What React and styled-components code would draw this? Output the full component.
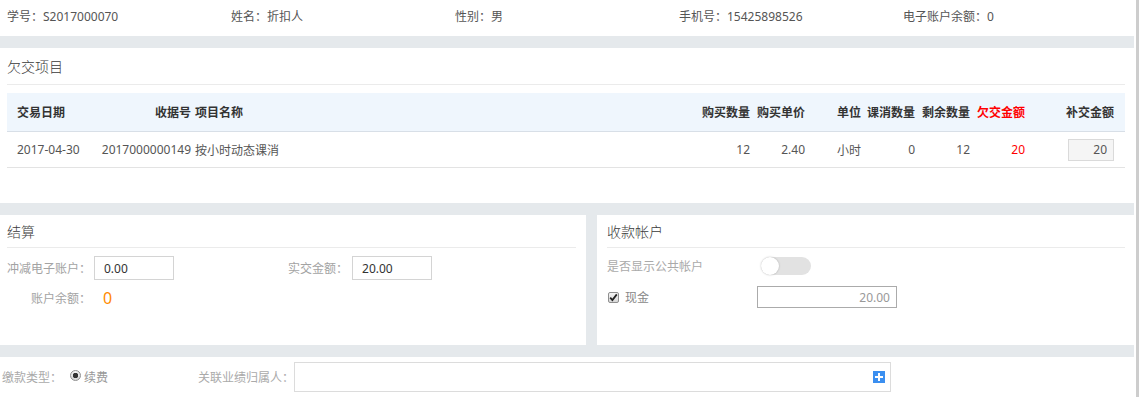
import React from 'react';
import styled, { createGlobalStyle } from 'styled-components';

const GlobalStyle = createGlobalStyle`
  body {
    margin: 0;
    background: #fff;
    font-family: "Noto Sans", "Noto Sans CJK SC", sans-serif;
    font-size: 12px;
    color: #555;
  }
`;

const Frame = styled.div`
  width: 1134px;
  padding-right: 2px;
  border-right: 3px solid #cdcdcd;
  min-height: 397px;
  display: flex;
`;

const Page = styled.div`
  flex: 1;
  display: flex;
  flex-direction: column;
  gap: 12px;
  background: #e5e9ec;
`;

const InfoBar = styled.div`
  display: grid;
  grid-template-columns: repeat(5, 224px);
  align-items: center;
  height: 32px;
  padding: 0 7px 4px;
  background: #fff;
  color: #555;
`;

const Section = styled.section`
  background: #fff;
  padding: 0 9px 35px 7px;
`;

const Title = styled.div`
  height: ${(p) => p.$h || 36}px;
  display: flex;
  align-items: center;
  font-size: 14px;
  font-weight: 300;
  color: #3a3a3a;
  border-bottom: 1px solid #ebebeb;
`;

const Table = styled.div`
  margin-top: 8px;
`;

const Row = styled.div`
  display: grid;
  grid-template-columns: 86px 100px 1fr 55px 55px 56px 54px 55px 55px 98px;
  align-items: center;
  height: ${(p) => (p.$head ? 38 : 35)}px;
  background: ${(p) => (p.$head ? '#eff6fd' : '#fff')};
  border-bottom: 1px solid ${(p) => (p.$head ? '#d8dfe7' : '#e3e3e3')};
  font-weight: ${(p) => (p.$head ? 'bold' : 'normal')};
  color: ${(p) => (p.$head ? '#333' : '#555')};
`;

const Cell = styled.div`
  padding: 0 ${(p) => p.$pr ?? 2}px 0 ${(p) => p.$pl ?? 2}px;
  color: ${(p) => p.$color || 'inherit'};
  white-space: nowrap;
  display: flex;
  justify-content: ${(p) => (p.$align === 'left' ? 'flex-start' : 'flex-end')};
`;

const TextInput = styled.input`
  box-sizing: border-box;
  width: ${(p) => p.$w}px;
  height: ${(p) => p.$h}px;
  margin: 0;
  padding: 0 ${(p) => (p.$align === 'right' ? 6 : 9)}px;
  border: 1px solid ${(p) => p.$border || '#d4d4d4'};
  background: ${(p) => p.$bg || '#fff'};
  color: ${(p) => p.$color || '#333'};
  text-align: ${(p) => p.$align || 'left'};
  font-family: "Noto Sans", "Noto Sans CJK SC", sans-serif;
  font-size: 12px;
  outline: none;
`;

const Panels = styled.div`
  display: grid;
  grid-template-columns: 586px 537px;
  column-gap: 11px;
  height: 130px;
`;

const Panel = styled.section`
  background: #fff;
  padding: 0 ${(p) => p.$pr}px 0 ${(p) => p.$pl}px;
`;

const FormRow = styled.div`
  display: flex;
  align-items: center;
  height: ${(p) => p.$h}px;
  margin-top: ${(p) => p.$mt}px;
`;

const Field = styled.div`
  display: flex;
  align-items: center;
  width: ${(p) => (p.$w ? `${p.$w}px` : 'auto')};
  height: ${(p) => (p.$h ? `${p.$h}px` : 'auto')};
`;

const Label = styled.span`
  display: inline-block;
  width: ${(p) => (p.$w ? `${p.$w}px` : 'auto')};
  text-align: ${(p) => p.$align || 'left'};
  margin-right: ${(p) => p.$mr || 0}px;
  color: ${(p) => p.$color || '#a3a3a3'};
  white-space: nowrap;
`;

const Amount = styled.span`
  padding-left: 9px;
  font-size: 16px;
  color: #ff8a00;
`;

const Toggle = styled.span`
  box-sizing: border-box;
  width: 50px;
  height: 18px;
  border-radius: 9px;
  background: #e2e2e2;
  display: flex;
  align-items: center;
  &::before {
    content: '';
    width: 18px;
    height: 18px;
    border-radius: 50%;
    background: #fff;
    box-shadow: 0 0 2px rgba(0, 0, 0, 0.25);
  }
`;

const CheckLabel = styled.span`
  width: 150px;
  display: flex;
  align-items: center;
  gap: 6px;
  padding-left: 1px;
  box-sizing: border-box;
  color: #888;
`;

const CheckBox = styled.span`
  box-sizing: border-box;
  width: 11px;
  height: 11px;
  border: 1px solid #8f8f8f;
  border-radius: 2px;
  background: linear-gradient(#f4f4f4, #d8d8d8);
  display: flex;
  align-items: center;
  justify-content: center;
`;

const BottomBar = styled.div`
  flex: 1;
  background: #fff;
  display: flex;
  align-items: flex-start;
  padding: 5px 0 0 2px;
`;

const Radio = styled.span`
  box-sizing: border-box;
  width: 11px;
  height: 11px;
  border-radius: 50%;
  border: 1px solid #8f8f8f;
  background: radial-gradient(circle, #333 0 2.5px, transparent 3px), linear-gradient(#f4f4f4, #d6d6d6);
  margin-right: 3px;
  margin-top: -3px;
`;

const PickerBox = styled.div`
  box-sizing: border-box;
  width: 597px;
  height: 30px;
  border: 1px solid #dcdcdc;
  display: flex;
  align-items: center;
  justify-content: flex-end;
  padding-right: 5px;
`;

const PlusButton = styled.span`
  width: 12px;
  height: 12px;
  background: #3b8ff0;
  display: flex;
`;

const cols = [
  { head: '交易日期', value: '2017-04-30', align: 'left', pl: 10 },
  { head: '收据号', value: '2017000000149' },
  { head: '项目名称', value: '按小时动态课消', align: 'left' },
  { head: '购买数量', value: '12' },
  { head: '购买单价', value: '2.40' },
  { head: '单位', value: '小时' },
  { head: '课消数量', value: '0' },
  { head: '剩余数量', value: '12' },
  { head: '欠交金额', value: '20', color: '#f00' },
];

const info = ['学号：S2017000070', '姓名：折扣人', '性别：男', '手机号：15425898526', '电子账户余额：0'];

export default function App() {
  return (
    <>
      <GlobalStyle />
      <Frame>
        <Page>
          <InfoBar>
            {info.map((t) => (
              <span key={t}>{t}</span>
            ))}
          </InfoBar>

          <Section>
            <Title>欠交项目</Title>
            <Table>
              <Row $head>
                {cols.map((c) => (
                  <Cell key={c.head} $align={c.align} $pl={c.pl} $color={c.color}>
                    {c.head}
                  </Cell>
                ))}
                <Cell $pr={11}>补交金额</Cell>
              </Row>
              <Row>
                {cols.map((c) => (
                  <Cell key={c.head} $align={c.align} $pl={c.pl} $color={c.color}>
                    {c.value}
                  </Cell>
                ))}
                <Cell $pr={11}>
                  <TextInput readOnly value="20" $w={46} $h={22} $align="right" $bg="#f5f5f5" $border="#dadada" $color="#555" />
                </Cell>
              </Row>
            </Table>
          </Section>

          <Panels>
            <Panel $pl={7} $pr={10}>
              <Title $h={32}>结算</Title>
              <FormRow $h={24} $mt={8}>
                <Field $w={281}>
                  <Label $w={84} $align="right" $mr={3}>冲减电子账户：</Label>
                  <TextInput readOnly value="0.00" $w={80} $h={24} />
                </Field>
                <Field>
                  <Label $mr={4}>实交金额：</Label>
                  <TextInput readOnly value="20.00" $w={80} $h={24} />
                </Field>
              </FormRow>
              <FormRow $h={24} $mt={6}>
                <Label $w={84} $align="right" $mr={3}>账户余额：</Label>
                <Amount>0</Amount>
              </FormRow>
            </Panel>

            <Panel $pl={10} $pr={9}>
              <Title $h={32}>收款帐户</Title>
              <FormRow $h={20} $mt={8}>
                <Label $w={154} $color="#aaa">是否显示公共帐户</Label>
                <Toggle />
              </FormRow>
              <FormRow $h={22} $mt={10}>
                <CheckLabel>
                  <CheckBox>
                    <svg width="9" height="9" viewBox="0 0 9 9">
                      <path d="M1.2 4.6 L3.4 7 L7.8 1.4" fill="none" stroke="#222" strokeWidth="1.8" />
                    </svg>
                  </CheckBox>
                  现金
                </CheckLabel>
                <TextInput readOnly value="20.00" $w={140} $h={22} $align="right" $border="#ababab" $color="#999" />
              </FormRow>
            </Panel>
          </Panels>

          <BottomBar>
            <Field $w={196} $h={30}>
              <Label $color="#aaa" $mr={8}>缴款类型：</Label>
              <Radio />
              <Label $color="#999">续费</Label>
            </Field>
            <Field $h={30}>
              <Label $color="#aaa">关联业绩归属人：</Label>
              <PickerBox>
                <PlusButton>
                  <svg width="12" height="12" viewBox="0 0 12 12">
                    <path d="M6 2 V10 M2 6 H10" stroke="#fff" strokeWidth="2" />
                  </svg>
                </PlusButton>
              </PickerBox>
            </Field>
          </BottomBar>
        </Page>
      </Frame>
    </>
  );
}
